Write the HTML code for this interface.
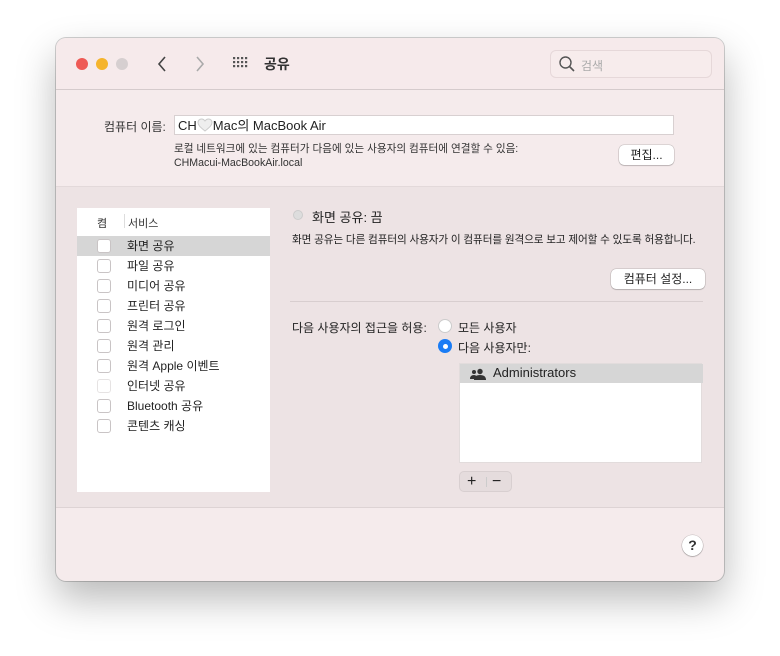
<!DOCTYPE html>
<html><head><meta charset="utf-8"><style>
*{margin:0;padding:0;box-sizing:border-box}
body{width:780px;height:656px;background:#fff;position:relative;overflow:hidden;font-family:"Liberation Sans","Noto Sans CJK KR",sans-serif;color:#222;font-size:12px}
.win{position:absolute;left:56px;top:38px;width:668px;height:543px;border-radius:10px;background:#f5ebec;box-shadow:0 0 0 1px rgba(0,0,0,.18),0 18px 40px rgba(0,0,0,.28);overflow:hidden}
.a{position:absolute;white-space:nowrap}
.dot{position:absolute;top:20px;width:12px;height:12px;border-radius:50%}
.cb{position:absolute;left:20px;width:14px;height:14px;border:1px solid #c9c4c5;border-radius:3px;background:#fff}
.btn{position:absolute;background:#fff;border-radius:5px;box-shadow:0 0 0 .5px rgba(0,0,0,.2),0 1px 1px rgba(0,0,0,.15);text-align:center;font-size:12px;line-height:20px}
</style></head><body>
<div class="win">
 <div class="a" style="left:0;top:0;width:668px;height:52px;background:#f6eaeb;border-bottom:1px solid #d5cbcc"></div>
 <div class="dot" style="left:20px;background:#ee5a55;"></div>
 <div class="dot" style="left:40px;background:#f5b42c"></div>
 <div class="dot" style="left:60px;background:#d6cfd0"></div>
 <svg class="a" style="left:100px;top:17px" width="12" height="18"><path d="M9 2 L3 9 L9 16" fill="none" stroke="#444" stroke-width="1.6"/></svg>
 <svg class="a" style="left:138px;top:17px" width="12" height="18"><path d="M3 2 L9 9 L3 16" fill="none" stroke="#aaa" stroke-width="1.6"/></svg>
 <svg class="a" style="left:176px;top:18px" width="18" height="14" fill="#555"><g id="r"><rect x="1" y="1" width="2.2" height="2.2"/><rect x="5" y="1" width="2.2" height="2.2"/><rect x="9" y="1" width="2.2" height="2.2"/><rect x="13" y="1" width="2.2" height="2.2"/></g><use href="#r" y="4"/><use href="#r" y="8"/></svg>
 <div class="a" style="left:208px;top:16px;font-size:14px;font-weight:bold;color:#333">공유</div>
 <div class="a" style="left:494px;top:12px;width:162px;height:28px;border:1px solid #e6d8d9;border-radius:6px;background:#f7ecec"></div>
 <svg class="a" style="left:502px;top:17px" width="18" height="18"><circle cx="7.5" cy="7.5" r="5.5" fill="none" stroke="#555" stroke-width="1.4"/><path d="M11.5 11.5 L16 16" stroke="#555" stroke-width="1.6"/></svg>
 <div class="a" style="left:525px;top:19px;color:#aaa">검색</div>

 <div class="a" style="left:48px;top:80px;color:#333">컴퓨터 이름:</div>
 <div class="a" style="left:118px;top:77px;width:500px;height:20px;background:#fff;border:1px solid #d8d0d1;font-size:13px;padding:1px 3px;line-height:17px">CH<svg width="16" height="14" style="vertical-align:-2px"><path d="M8 13 C3 9 1 7 1 4.5 C1 2.5 2.5 1 4.5 1 C6 1 7.3 2 8 3 C8.7 2 10 1 11.5 1 C13.5 1 15 2.5 15 4.5 C15 7 13 9 8 13Z" fill="#eee" stroke="#ccc"/></svg>Mac의 MacBook Air</div>
 <div class="a" style="left:118px;top:104px;font-size:10.6px;line-height:14px;color:#333">로컬 네트워크에 있는 컴퓨터가 다음에 있는 사용자의 컴퓨터에 연결할 수 있음:<br>CHMacui-MacBookAir.local</div>
 <div class="btn" style="left:563px;top:107px;width:55px">편집...</div>

 <div class="a" style="left:0;top:148px;width:668px;height:322px;background:#ede3e4;border-top:1px solid #e3d9da;border-bottom:1px solid #ddd3d4"></div>
 <div class="a" style="left:21px;top:170px;width:193px;height:284px;background:#fff">
  <div class="a" style="left:20px;top:7px;font-size:11px;color:#333">켬</div>
  <div class="a" style="left:47px;top:6px;height:14px;border-left:1px solid #ddd"></div>
  <div class="a" style="left:51px;top:7px;font-size:11px;color:#333">서비스</div>
  <div class="a" style="left:0;top:28px;width:193px;height:20px;background:#d6d6d6"></div>
  <div style="position:absolute;left:0;top:28px;width:193px">
   <div class="a" style="left:50px;top:2px;line-height:16px">화면 공유</div><div class="cb" style="top:3px"></div>
   <div class="a" style="left:50px;top:22px;line-height:16px">파일 공유</div><div class="cb" style="top:23px"></div>
   <div class="a" style="left:50px;top:42px;line-height:16px">미디어 공유</div><div class="cb" style="top:43px"></div>
   <div class="a" style="left:50px;top:62px;line-height:16px">프린터 공유</div><div class="cb" style="top:63px"></div>
   <div class="a" style="left:50px;top:82px;line-height:16px">원격 로그인</div><div class="cb" style="top:83px"></div>
   <div class="a" style="left:50px;top:102px;line-height:16px">원격 관리</div><div class="cb" style="top:103px"></div>
   <div class="a" style="left:50px;top:122px;line-height:16px">원격 Apple 이벤트</div><div class="cb" style="top:123px"></div>
   <div class="a" style="left:50px;top:142px;line-height:16px">인터넷 공유</div><div class="cb" style="top:143px;border-color:#e6e3e3"></div>
   <div class="a" style="left:50px;top:162px;line-height:16px">Bluetooth 공유</div><div class="cb" style="top:163px"></div>
   <div class="a" style="left:50px;top:182px;line-height:16px">콘텐츠 캐싱</div><div class="cb" style="top:183px"></div>
  </div>
 </div>
 <div class="a" style="left:237px;top:172px;width:10px;height:10px;border-radius:50%;background:#ddd;border:1px solid #ccc"></div>
 <div class="a" style="left:256px;top:169px;font-size:13px">화면 공유: 끔</div>
 <div class="a" style="left:236px;top:194px;font-size:10.6px;letter-spacing:-0.1px">화면 공유는 다른 컴퓨터의 사용자가 이 컴퓨터를 원격으로 보고 제어할 수 있도록 허용합니다.</div>
 <div class="btn" style="left:555px;top:231px;width:94px">컴퓨터 설정...</div>
 <div class="a" style="left:234px;top:263px;width:413px;border-top:1px solid #d8cecf"></div>
 <div class="a" style="left:236px;top:281px">다음 사용자의 접근을 허용:</div>
 <div class="a" style="left:382px;top:281px;width:14px;height:14px;border-radius:50%;background:#fff;border:1px solid #ccc"></div>
 <div class="a" style="left:402px;top:281px">모든 사용자</div>
 <div class="a" style="left:382px;top:301px;width:14px;height:14px;border-radius:50%;background:#1a7cf5"><div style="position:absolute;left:4.5px;top:4.5px;width:5px;height:5px;border-radius:50%;background:#fff"></div></div>
 <div class="a" style="left:402px;top:301px">다음 사용자만:</div>
 <div class="a" style="left:403px;top:325px;width:243px;height:100px;background:#fff;border:1px solid #e2dcdc">
  <div class="a" style="left:0;top:0;width:243px;height:19px;background:#d6d6d6"></div>
  <svg class="a" style="left:9px;top:3px" width="18" height="14" fill="#333"><circle cx="5" cy="5" r="2"/><path d="M1 12 Q1 8 5 8 Q8 8 8 12Z"/><circle cx="11" cy="4.5" r="2.7"/><path d="M5 13 Q5 8 11 8 Q17 8 17 13Z"/></svg>
  <div class="a" style="left:33px;top:1px;font-size:13px">Administrators</div>
 </div>
 <div class="a" style="left:403px;top:433px;width:53px;height:21px;border-radius:5px;background:#e5dcdd;border:1px solid #d8cfd0">
  <div class="a" style="left:7px;top:0;font-size:16px;line-height:19px">+</div>
  <div class="a" style="left:26px;top:5px;height:10px;border-left:1px solid #ccc"></div>
  <div class="a" style="left:32px;top:0;font-size:16px;line-height:19px">−</div>
 </div>
 <div class="a" style="left:626px;top:497px;width:21px;height:21px;border-radius:50%;background:#fff;box-shadow:0 0 0 .5px rgba(0,0,0,.2),0 1px 1px rgba(0,0,0,.2);text-align:center;font-size:14px;line-height:21px;font-weight:bold;color:#333">?</div>
</div>
</body></html>
